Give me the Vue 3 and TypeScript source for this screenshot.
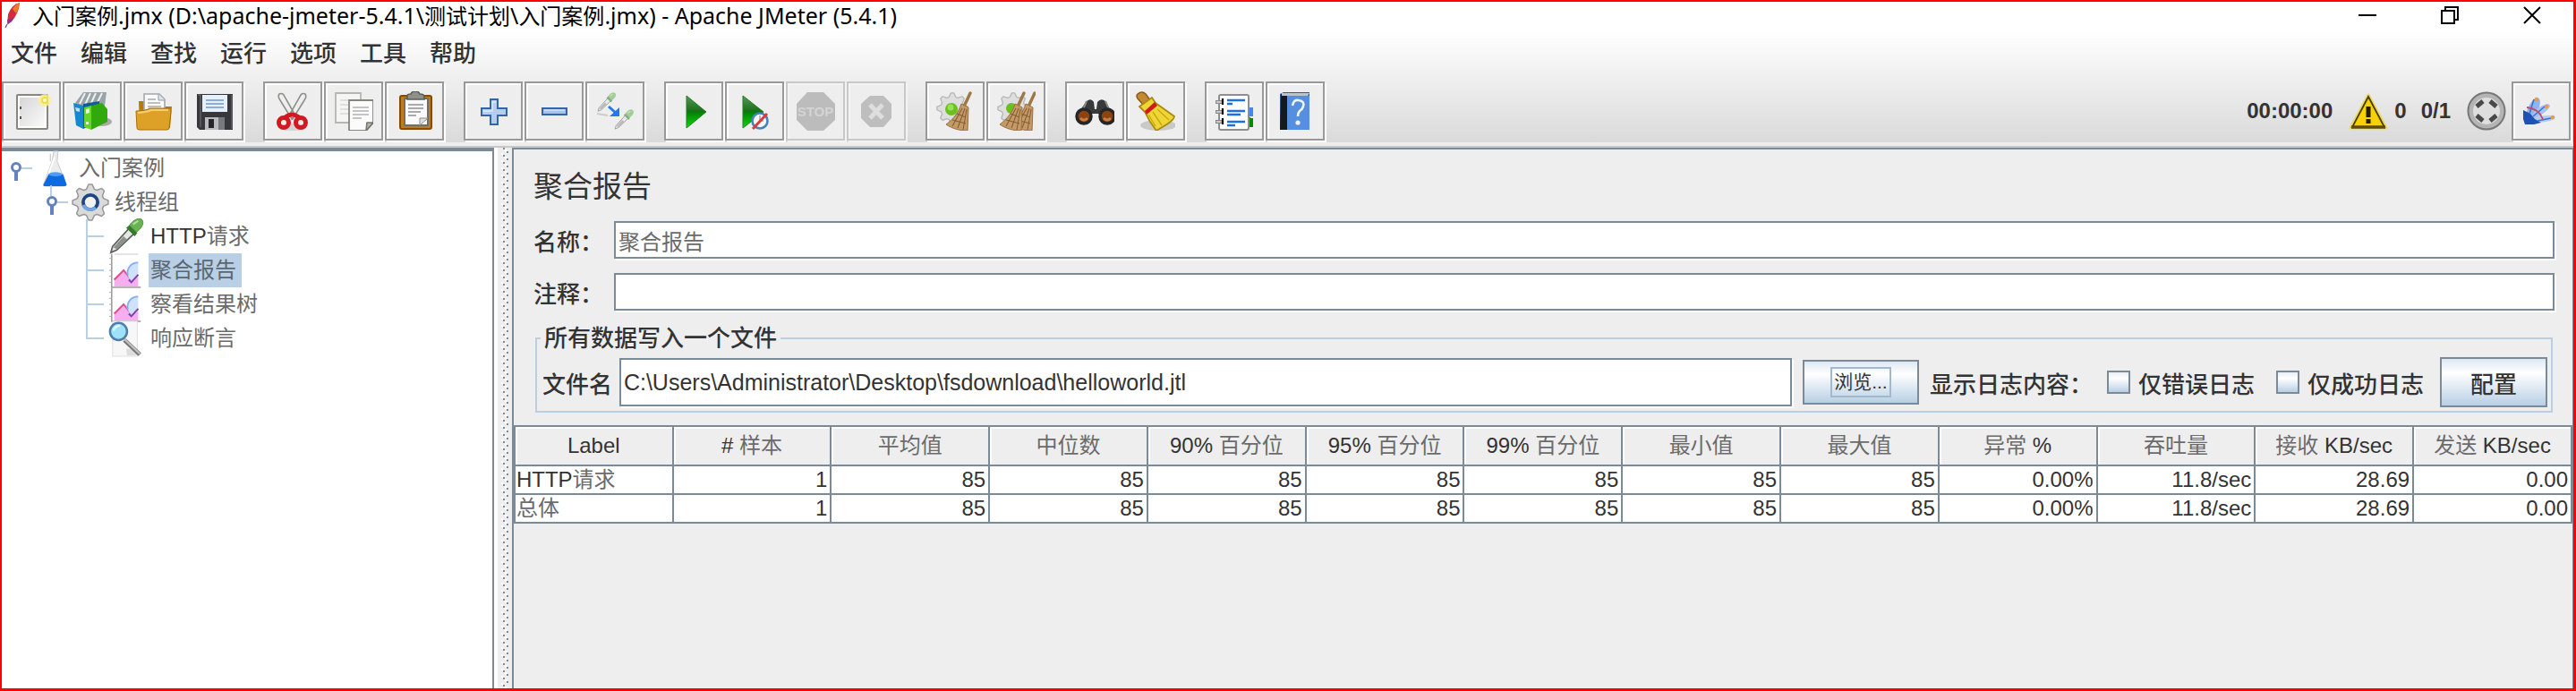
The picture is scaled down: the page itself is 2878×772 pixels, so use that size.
<script setup lang="ts">
import { ref } from 'vue'

interface ToolButton {
  id: string
  label: string
  disabled?: boolean
}
interface TreeNode {
  label: string
  icon: string
  level: number
  guide: string
  selected?: boolean
}
interface Segment {
  text: string
  han: boolean
}

const title = '入门案例.jmx (D:\\apache-jmeter-5.4.1\\测试计划\\入门案例.jmx) - Apache JMeter (5.4.1)'
const menus = ['文件', '编辑', '查找', '运行', '选项', '工具', '帮助']

const toolGroups: ToolButton[][] = [
  [
    { id: 'new', label: '新建' },
    { id: 'templates', label: '模板' },
    { id: 'open', label: '打开' },
    { id: 'save', label: '保存' },
  ],
  [
    { id: 'cut', label: '剪切' },
    { id: 'copy', label: '复制' },
    { id: 'paste', label: '粘贴' },
  ],
  [
    { id: 'plus', label: '展开' },
    { id: 'minus', label: '折叠' },
    { id: 'toggle', label: '切换' },
  ],
  [
    { id: 'start', label: '启动' },
    { id: 'startNoTimers', label: '不停顿开始' },
    { id: 'stop', label: '停止', disabled: true },
    { id: 'shutdown', label: '关闭', disabled: true },
  ],
  [
    { id: 'clear', label: '清除' },
    { id: 'clearAll', label: '清除全部' },
  ],
  [
    { id: 'search', label: '搜索' },
    { id: 'resetSearch', label: '重置搜索' },
  ],
  [
    { id: 'functions', label: '函数助手' },
    { id: 'help', label: '帮助' },
  ],
]

const gear = (fill: string, stroke: string): string => {
  const pts: string[] = []
  for (let i = 0; i < 32; i++) {
    const r = i % 4 < 2 ? 21 : 16
    const a = ((i - 0.5) / 32) * Math.PI * 2
    pts.push(`${(22 + r * Math.cos(a)).toFixed(1)},${(22 + r * Math.sin(a)).toFixed(1)}`)
  }
  return `<polygon points="${pts.join(' ')}" fill="${fill}" stroke="${stroke}" stroke-width="1.6" stroke-linejoin="round"/>`
}

const broom =
  '<path d="M39 2l-7 15" stroke="#a07848" stroke-width="3.4" stroke-linecap="round"/>' +
  '<path d="M29 14l8 4-1 26C28 44 19 42 12 37c8-6 14-13 17-23z" fill="#c39a68" stroke="#98703f"/>' +
  '<path d="M30 19l-11 20M33 19l-8 22M35 20l-4 23M24 25l10 4M19 32l15 4" stroke="#86602f" stroke-width="1.1" fill="none"/>'

const dropper =
  '<path d="M4 41l2-7L25 13l6 6L11 38z" fill="#e4e7e4" stroke="#5d625d" stroke-width="1.8"/>' +
  '<path d="M7 35L19 22l4 4L11 37z" fill="#8c918c"/>' +
  '<path d="M22 12l10 10 3-4-9-9z" fill="#347a2c"/>' +
  '<path d="M26 9C29 4 35 0 40 2c4 4 0 11-6 15z" fill="#68b453" stroke="#4d923e"/>' +
  '<path d="M30 8l6-4" stroke="#b6e0a4" stroke-width="2"/>'

const chart =
  '<path d="M5 3v39h34" stroke="#999" stroke-width="1.6" fill="none"/><path d="M2 8h3M2 15h3M2 22h3M2 29h3M2 36h3" stroke="#aaa"/>' +
  '<path d="M8 41v-9l11-10 9 9 8-5v15z" fill="#f5aeee"/><path d="M8 33l11-11 8 10 7-5" stroke="#dc5187" stroke-width="2" fill="none"/>' +
  '<path d="M36 13c-10 0-14 9-12 15 2 7 6 7 12 1z" fill="#cfe1fb"/><path d="M36 13c-10 0-14 9-12 15" stroke="#86aef0" stroke-width="2" fill="none"/><path d="M25 33l3 3 8-9" stroke="#7b42ac" stroke-width="2" fill="none"/>'

const icons: Record<string, string> = {
  new:
    '<defs><linearGradient id="paper" x1="0" y1="0" x2="1" y2="1"><stop offset="0" stop-color="#d6d6d6"/><stop offset="1" stop-color="#fafafa"/></linearGradient></defs>' +
    '<rect x="6" y="4" width="34" height="38" rx="1" fill="#fff" stroke="#878780" stroke-width="2"/><rect x="9" y="7" width="28" height="32" fill="url(#paper)"/>' +
    '<path d="M10 17v3M10 28v3" stroke="#555" stroke-width="2"/><circle cx="37" cy="10" r="7" fill="#fbf08c" opacity=".8"/><circle cx="37" cy="10" r="3" fill="#fffde0" stroke="#f2dd42" stroke-width="2"/>',
  templates:
    '<ellipse cx="33" cy="34" rx="11" ry="5" fill="#aaa"/><path d="M3 13L12 1h26l-2 15-14 4-16-2z" fill="#9aa4a8"/><path d="M8 14l6-12M14 15l6-13M20 15l6-13M27 14l6-12" stroke="#eef0f0" stroke-width="2"/>' +
    '<path d="M1 13l11 3v26L4 38z" fill="#1688cf"/><path d="M12 14l18-3v22l-18 9z" fill="#0c5d98"/><path d="M3 18l5 1v4l-4-1z" fill="#b9e3fb"/>' +
    '<path d="M13 18l8-2v27l-8-3z" fill="#67d726"/><path d="M21 16l12-3 6 7v14L21 43z" fill="#31a80b"/><path d="M15 20l4-1v5l-4 1zM15 34h3v3h-3z" fill="#e7ffd8"/>',
  open:
    '<path d="M6 11h7l3 6h27l-2 24H7z" fill="#b87906"/><path d="M12 3h17l6 6v16H12z" fill="#fafafa" stroke="#a3a8ab" stroke-width="1.6"/><path d="M28 3v7h7" fill="#dce5e7" stroke="#8ea2a6"/>' +
    '<path d="M16 9h9M16 13h14M16 17h15" stroke="#aaa" stroke-width="1.6"/><path d="M3 22q11 0 15-3h22q2 0 2 3l-2 19q0 2-3 2H7q-3 0-3-2z" fill="#dda128" stroke="#a8700b"/><path d="M5 24q11-1 15-3h19" stroke="#f7cd73" stroke-width="2" fill="none"/>',
  save:
    '<path d="M3 3h40v40H6l-3-3z" fill="#38383c"/><path d="M4 4h3v36M42 4v38" stroke="#77777b" fill="none"/><rect x="9" y="4" width="28" height="19" fill="#e7f0fa"/><path d="M13 10h20M13 14h20M13 18h20" stroke="#8baed4" stroke-width="2"/>' +
    '<path d="M12 29h22v14H12z" fill="#b9bbbf"/><path d="M16 31h6v10h-6z" fill="#26262a"/><path d="M27 29h7v14h-7z" fill="#77797e"/>',
  cut:
    '<ellipse cx="22" cy="40" rx="16" ry="4" fill="#d4d4d4"/><path d="M7 3q4-2 6 3l12 21-4 4L8 10q-3-4-1-7zM36 3q-4-2-6 3L18 27l4 4L35 10q3-4 1-7z" fill="#eee" stroke="#8e8e8a" stroke-width="1.6"/>' +
    '<circle cx="12" cy="35" r="5.5" fill="none" stroke="#d21820" stroke-width="5"/><circle cx="31" cy="35" r="5.5" fill="none" stroke="#d21820" stroke-width="5"/><path d="M14 29q7-6 15 0" stroke="#d21820" stroke-width="5" fill="none"/>',
  copy:
    '<path d="M2 2h28v33H2z" fill="#f5f5f5" stroke="#b5b5b2" stroke-width="1.8"/><path d="M7 10h18M7 15h18M7 20h18M7 25h18" stroke="#d8d8d8" stroke-width="1.6"/>' +
    '<path d="M17 10h27v25l-8 9H17z" fill="#fbfbfb" stroke="#858580" stroke-width="1.8"/><path d="M21 18h18M21 22h18M21 26h18M21 30h10" stroke="#b2b2b2" stroke-width="1.6"/><path d="M44 35h-7l-1 9z" fill="#b5b9b2" stroke="#73776f" stroke-width="1.6"/>',
  paste:
    '<rect x="6" y="5" width="35" height="37" rx="2" fill="#bd7b22" stroke="#7d4c0e" stroke-width="2"/><path d="M11 8h26v30H11z" fill="#fafafa" stroke="#6f6f68" stroke-width="2"/>' +
    '<path d="M14 5q0-2 4-2 1-3 5-3t5 3q5 0 5 3v3H14z" fill="#8f9188" stroke="#5a5c54" stroke-width="1.6"/><path d="M15 15h17M15 19h17M15 23h14M15 27h9" stroke="#aaa" stroke-width="2"/><path d="M28 38v-8h9z" fill="#dedede" stroke="#8c8c86"/>',
  plus:
    '<path d="M19 9h8v10h10v8H27v10h-8V27H9v-8h10z" fill="#b6cdee" stroke="#3465a4" stroke-width="2"/><path d="M21 22v-10h4M11 22h10" stroke="#dfeafa" stroke-width="1.4" fill="none"/>',
  minus: '<rect x="9" y="19" width="27" height="7" fill="#a7c3ea" stroke="#3465a4" stroke-width="2"/><path d="M11 21h23" stroke="#d6e3f7" stroke-width="1.4"/>',
  toggle:
    '<g transform="translate(1 1) scale(.52)" opacity=".55">' + dropper + '</g><g transform="translate(20 20) scale(.54)" opacity=".55">' + dropper + '</g>' +
    '<path d="M15 17l9 8" stroke="#2378ee" stroke-width="3"/><path d="M27 18v10H16z" fill="#2378ee"/><path d="M2 25l12 2" stroke="#ccc" stroke-width="2"/>',
  start:
    '<defs><linearGradient id="go" x1="0" y1="0" x2="0" y2="1"><stop offset="0" stop-color="#5a965a"/><stop offset=".48" stop-color="#187018"/><stop offset=".53" stop-color="#008600"/><stop offset="1" stop-color="#12d812"/></linearGradient></defs><path d="M14 5l22 18L14 41z" fill="url(#go)" stroke="#208020"/>',
  startNoTimers:
    '<path d="M9 5l23 18L9 41z" fill="url(#go)" stroke="#208020"/><circle cx="28" cy="33" r="8.5" fill="#f6f7f8" stroke="#4682bd" stroke-width="2.6"/><path d="M28 27v6h4" stroke="#9ab" stroke-width="1.6" fill="none"/><path d="M36 25L20 42" stroke="#d93c3c" stroke-width="3"/>',
  stop:
    '<path d="M13 1h18l13 13v18L31 44H13L1 32V14z" fill="#bcbcbc"/><text x="22" y="28" text-anchor="middle" font-family="Liberation Sans, sans-serif" font-weight="700" font-size="15" fill="#d4d4d4">STOP</text>',
  shutdown: '<path d="M15 5h15l9 9v16l-9 10H15l-10-10V14z" fill="#bebebe"/><path d="M15 15l14 15M29 15L15 30" stroke="#dedede" stroke-width="5"/>',
  clear: '<g transform="translate(1 1) scale(.82)">' + gear('#dedede', '#b6b6b6') + '</g><circle cx="18" cy="20" r="7" fill="#6bc01e"/><circle cx="17" cy="18" r="3.5" fill="#99df57"/>' + broom,
  clearAll:
    '<g transform="translate(1 1) scale(.82)">' + gear('#dedede', '#b6b6b6') + '</g><circle cx="17" cy="19" r="6" fill="#6bc01e"/><g transform="translate(4 0)">' + broom + '</g><g transform="translate(-8 0)">' + broom + '</g>',
  search:
    '<path d="M13 11q5-4 8 1l1 8h2l1-8q4-5 9-1l8 15-9 6-7-7h-7l-8 7-8-7z" fill="#37393b"/><path d="M13 11l-6 14M34 11l6 14" stroke="#888" stroke-width="2"/>' +
    '<circle cx="10" cy="28" r="8" fill="#8c4312" stroke="#262626" stroke-width="3.5"/><circle cx="36" cy="28" r="8" fill="#8c4312" stroke="#262626" stroke-width="3.5"/><path d="M6 30q4 4 8 0M32 30q4 4 8 0" stroke="#cb7b3b" stroke-width="3" fill="none"/>',
  resetSearch:
    '<ellipse cx="25" cy="38" rx="20" ry="6" fill="#c9c9c6"/><path d="M2 3q5-4 9 0l5 7-7 6-7-8q-2-3 0-5z" fill="#c58936" stroke="#8c5a18" stroke-width="1.5"/>' +
    '<path d="M4 17L18 7l4 6 21 15q0 3-7 8l-13 8q-8-10-13-21z" fill="#edd635" stroke="#ab8b0d" stroke-width="1.8"/><path d="M10 22l11-10 3 4-12 10z" fill="#d11920"/><path d="M19 23l10 15M24 20l13 12M14 26l8 13" stroke="#c8a910" stroke-width="1.4"/>',
  functions:
    '<path d="M33 19h7v8h-7z" fill="#3f89ec"/><path d="M33 29h7v10h-7z" fill="#078807"/><rect x="5" y="4" width="33" height="39" rx="2" fill="#fff" stroke="#8e8e8e" stroke-width="2"/>' +
    '<path d="M39 18h4v10h-4z" fill="#3f89ec"/><path d="M39 30h4v10h-4z" fill="#078807"/>' +
    '<path d="M1 12h8M1 23h8M1 34h8" stroke="#888" stroke-width="4"/><path d="M2 12h7M2 23h7M2 34h7" stroke="#ddd" stroke-width="1.4"/><path d="M9 8v7M9 19v7M9 30v7" stroke="#111" stroke-width="2.2"/><path d="M14 10h20M14 22h20M14 34h20" stroke="#1c70e4" stroke-width="2.4"/><path d="M14 14h6M14 26h15M14 38h9" stroke="#1c70e4" stroke-width="2.4"/>',
  help:
    '<path d="M5 3l4-2h29v42H5z" fill="#2f5c9b"/><path d="M6 3h7v40H5z" fill="#17191d"/><path d="M13 5h25v38H13z" fill="#568fdf"/><path d="M7 2h31l-2 3H7z" fill="#b8c5cc"/><path d="M19 16q1-7 7-6 7 1 5 7-1 3-4 5-2 2-2 6" stroke="#edf5ff" stroke-width="2.6" fill="none"/><circle cx="25" cy="35" r="2.6" fill="#edf5ff"/>',
  flask:
    '<path d="M21 2h5l-1 12 11 27q0 2-4 2H12q-4 0-3-2l10-27z" fill="#ececec" stroke="#c3c8cc"/><path d="M17 5v9" stroke="#bbb"/><path d="M15 29h17l4 12q0 2-4 2H12q-4 0-3-2z" fill="#0d6ae0"/><ellipse cx="23" cy="29" rx="8" ry="2.5" fill="#4e9df8"/><path d="M22 9l-7 19" stroke="#fff" stroke-width="2"/>',
  threads:
    gear('#dadada', '#989898') + '<circle cx="22" cy="22" r="8.5" fill="#f2f2f2" stroke="#1e4588" stroke-width="4"/><path d="M14 25a8.5 8.5 0 0 0 14 3" stroke="#76a5e2" stroke-width="4" fill="none"/>',
  sampler: dropper + '<path d="M8 43h28" stroke="#ddd" stroke-width="1.6"/>',
  report: chart,
  assertion:
    '<path d="M6 2h29v41H6z" fill="#f7f7f7" stroke="#e0e0e0"/><path d="M22 34h10l4 8H23z" fill="#ddd"/><path d="M20 24l18 17" stroke="#777" stroke-width="5"/><path d="M20 23l18 17" stroke="#c5c5c5" stroke-width="2"/><circle cx="13" cy="14" r="10" fill="#9fe1f8" stroke="#4f7da9" stroke-width="2.6"/><path d="M7 13q2-6 8-6" stroke="#defbff" stroke-width="2.6" fill="none"/>',
  warning:
    '<path d="M22 4L2 41h40z" fill="#f4cf00" stroke="#e9d95c" stroke-width="3" stroke-linejoin="round"/><path d="M22 6L4 40h36z" fill="#f7d200" stroke="#4a3b0a" stroke-width="1.8"/><path d="M3 40h38" stroke="#5e4a0b" stroke-width="3.4"/><path d="M22 17v12" stroke="#231c05" stroke-width="5"/><path d="M22 31v5" stroke="#231c05" stroke-width="5"/>',
  remote:
    '<circle cx="22" cy="22" r="20.5" fill="#b4b4b4" stroke="#777" stroke-width="2"/><circle cx="22" cy="22" r="15" fill="#dedede"/><path d="M11 17l7-6M26 11l7 6M11 27l7 6M26 33l7-6" stroke="#494949" stroke-width="5"/>',
  logo:
    '<path d="M5 35q-1-18 11-28 7-1 4 11L10 34z" fill="#8fb4ee"/><path d="M8 32Q17 16 29 14q6 1 0 7L11 35z" fill="#a5c2f2"/><path d="M7 33q12-7 26-6 10 2-1 6-10 3-24 1z" fill="#b4cbf5"/><path d="M2 21l8 4 5 6 7 4-8 2H4l-2-6z" fill="#2050b4"/><path d="M9 25l5-16M13 28l13-11M18 33l15-3" stroke="#3975d0" stroke-width="1.6"/><path d="M6 18q13 1 18 13" stroke="#c44b69" stroke-width="1.8" fill="none"/><circle cx="17" cy="9" r="2.2" fill="#e99a51"/><circle cx="28" cy="17" r="2.2" fill="#e99a51"/><circle cx="35" cy="29" r="2.2" fill="#e99a51"/>',
}

const guides: Record<string, string> = {
  root: '<path d="M22 19h12" stroke="#b8cfe5" stroke-width="2"/><path d="M16 22v11" stroke="#6382bf" stroke-width="4"/><circle cx="16" cy="18" r="4.5" fill="#fff" stroke="#6382bf" stroke-width="3"/>',
  branch:
    '<path d="M55 0v12M62 19h12" stroke="#b8cfe5" stroke-width="2"/><path d="M56 22v11" stroke="#6382bf" stroke-width="4"/><circle cx="56" cy="18" r="4.5" fill="#fff" stroke="#6382bf" stroke-width="3"/>',
  leaf: '<path d="M95 0v38M95 19h19" stroke="#b8cfe5" stroke-width="2"/>',
  last: '<path d="M95 0v19h19" stroke="#b8cfe5" stroke-width="2" fill="none"/>',
}

const tree: TreeNode[] = [
  { label: '入门案例', icon: 'flask', level: 1, guide: 'root' },
  { label: '线程组', icon: 'threads', level: 2, guide: 'branch' },
  { label: 'HTTP请求', icon: 'sampler', level: 3, guide: 'leaf' },
  { label: '聚合报告', icon: 'report', level: 3, guide: 'leaf', selected: true },
  { label: '察看结果树', icon: 'report', level: 3, guide: 'leaf' },
  { label: '响应断言', icon: 'assertion', level: 3, guide: 'last' },
]

const name = ref('聚合报告')
const comment = ref('')
const fileName = ref('C:\\Users\\Administrator\\Desktop\\fsdownload\\helloworld.jtl')
const errorsOnly = ref(false)
const successOnly = ref(false)

const columns = ['Label', '# 样本', '平均值', '中位数', '90% 百分位', '95% 百分位', '99% 百分位', '最小值', '最大值', '异常 %', '吞吐量', '接收 KB/sec', '发送 KB/sec']
const stats = ['1', '85', '85', '85', '85', '85', '85', '85', '0.00%', '11.8/sec', '28.69', '0.00']
const rows = [
  ['HTTP请求', ...stats],
  ['总体', ...stats],
]

/** Splits a label into runs of Chinese and Latin text so each can have its own tone. */
function segments(text: string): Segment[] {
  return (text.match(/[\u4e00-\u9fff]+|[^\u4e00-\u9fff]+/g) ?? []).map((t) => ({
    text: t,
    han: /[\u4e00-\u9fff]/.test(t),
  }))
}
</script>

<template>
  <div class="window">
    <header class="top">
      <div class="titlebar">
        <svg class="feather" viewBox="0 0 20 30" aria-hidden="true">
          <path d="M17 1q-9 2-13 13l-1 11 5-3q8-9 9-21z" fill="#d22d3c" />
          <path d="M17 1q-5 2-8 7l4 5q3-5 4-12z" fill="#ee7b25" />
          <path d="M3 20l1 5 4-3 2-4z" fill="#89338c" />
          <path d="M3 25l-2 4" stroke="#6b5aa8" stroke-width="1.4" />
        </svg>
        <h1><span v-for="(s, k) in segments(title)" :key="k" :class="{ 'title-han': s.han }">{{ s.text }}</span></h1>
        <div class="controls">
          <button type="button" aria-label="最小化"><svg viewBox="0 0 22 22"><path d="M1 11h20" /></svg></button>
          <button type="button" aria-label="还原"><svg viewBox="0 0 22 22"><path d="M2 6h14v14H2zM6 6V2h14v14h-4" /></svg></button>
          <button type="button" aria-label="关闭"><svg viewBox="0 0 22 22"><path d="M2 2l18 18M20 2L2 20" /></svg></button>
        </div>
      </div>
      <nav class="menubar">
        <button v-for="m in menus" :key="m" type="button">{{ m }}</button>
      </nav>
      <div class="toolbar">
        <div v-for="(group, g) in toolGroups" :key="g" class="group">
          <button v-for="b in group" :key="b.id" type="button" class="tool" :disabled="b.disabled" :aria-label="b.label">
            <svg class="icon" viewBox="0 0 44 44" fill="none" v-html="icons[b.id]"></svg>
          </button>
        </div>
        <div class="status">
          <span class="time">00:00:00</span>
          <svg class="icon" viewBox="0 0 44 44" fill="none" v-html="icons.warning"></svg>
          <span class="errors">0</span>
          <span class="threads">0/1</span>
          <svg class="icon" viewBox="0 0 44 44" fill="none" v-html="icons.remote"></svg>
          <button type="button" class="tool" aria-label="JMeter">
            <svg class="icon" viewBox="0 0 44 44" fill="none" v-html="icons.logo"></svg>
          </button>
        </div>
      </div>
    </header>

    <main class="workspace">
      <ul class="tree">
        <li v-for="(n, i) in tree" :key="i">
          <svg class="guide" :class="'level' + n.level" height="38" fill="none" v-html="guides[n.guide]"></svg>
          <svg class="icon" viewBox="0 0 44 44" fill="none" v-html="icons[n.icon]"></svg>
          <span class="node" :class="{ selected: n.selected }"
            ><span v-for="(s, k) in segments(n.label)" :key="k" :class="{ han: s.han }">{{ s.text }}</span></span
          >
        </li>
      </ul>

      <svg class="splitter" aria-hidden="true">
        <defs>
          <pattern id="bumps" width="16" height="8" patternUnits="userSpaceOnUse">
            <path d="M4 6h2v2H4zM8 2h2v2H8z" fill="#fff" />
            <path d="M6 0h2v2H6zM10 4h2v2h-2z" fill="#7a8a99" />
          </pattern>
        </defs>
        <rect width="16" height="100%" fill="url(#bumps)" />
      </svg>

      <section class="panel">
        <div class="form">
          <h2>聚合报告</h2>
          <div class="row">
            <label for="name">名称：</label>
            <input id="name" v-model="name" class="han" type="text" />
          </div>
          <div class="row">
            <label for="comment">注释：</label>
            <input id="comment" v-model="comment" type="text" />
          </div>
          <fieldset>
            <legend>所有数据写入一个文件</legend>
            <div class="file">
              <label for="file">文件名</label>
              <input id="file" v-model="fileName" type="text" />
              <button type="button" class="metal browse"><span>浏览...</span></button>
              <span class="log">显示日志内容：</span>
              <label class="check"><input v-model="errorsOnly" type="checkbox" />仅错误日志</label>
              <label class="check"><input v-model="successOnly" type="checkbox" />仅成功日志</label>
              <button type="button" class="metal config">配置</button>
            </div>
          </fieldset>
        </div>
        <div class="results">
          <table>
            <thead>
              <tr>
                <th v-for="c in columns" :key="c" scope="col"
                  ><span v-for="(s, k) in segments(c)" :key="k" :class="{ han: s.han }">{{ s.text }}</span></th
                >
              </tr>
            </thead>
            <tbody>
              <tr v-for="(r, i) in rows" :key="i">
                <td v-for="(v, j) in r" :key="j"
                  ><span v-for="(s, k) in segments(v)" :key="k" :class="{ han: s.han }">{{ s.text }}</span></td
                >
              </tr>
            </tbody>
          </table>
        </div>
      </section>
    </main>
  </div>
</template>

<style>
body {
  margin: 0;
}
</style>

<style scoped>
* {
  box-sizing: border-box;
}
.window {
  display: flex;
  flex-direction: column;
  min-height: 100vh;
  border: solid #f00;
  border-width: 2px 3px 3px 2px;
  background: #eee;
  color: #333;
  font-family: 'Liberation Sans', 'Noto Sans CJK SC', sans-serif;
  font-size: 24px;
}
button,
input {
  margin: 0;
  padding: 0;
  border: 0;
  background: none;
  color: inherit;
  font: inherit;
}
.icon {
  display: block;
  flex: none;
  width: 44px;
  height: 44px;
}
.top {
  border-bottom: 2px solid #c8c8c8;
  background: linear-gradient(#fff 32px, #dadada 157px, #eee 157px);
}
.titlebar {
  display: flex;
  height: 30px;
  align-items: center;
  color: #000;
}
.feather {
  width: 20px;
  height: 30px;
  margin-left: 3px;
}
h1 {
  flex: 1;
  margin: 0 0 0 11px;
  font: 400 25px/28px 'Noto Sans', 'Noto Sans CJK SC', sans-serif;
}
.title-han {
  font-size: 24px;
}
.controls {
  display: flex;
}
.controls button {
  display: flex;
  width: 92px;
  height: 28px;
  align-items: center;
  justify-content: center;
}
.controls svg {
  width: 22px;
  height: 22px;
  fill: none;
  stroke: #000;
  stroke-width: 2;
}
.menubar {
  display: flex;
  gap: 26px;
  height: 59px;
  padding: 8px 0 0 10px;
  align-items: flex-start;
}
.menubar button {
  font-size: 26px;
  font-weight: 500;
  line-height: 40px;
}
.toolbar {
  display: flex;
  height: 72px;
  gap: 22px;
}
.group {
  display: flex;
  gap: 2px;
}
.tool {
  display: flex;
  flex: none;
  width: 66px;
  height: 66px;
  align-items: center;
  justify-content: center;
  border: 2px solid #999;
  background: #eee;
  box-shadow: inset 2px 2px #fff, 2px 2px #fff;
}
.tool:disabled {
  border-color: #c8c8c8;
  box-shadow: inset 2px 2px #f3f3f3, 2px 2px #f3f3f3;
}
.status {
  display: flex;
  height: 66px;
  margin-left: auto;
  padding-right: 3px;
  align-items: center;
  font-weight: 700;
}
.time {
  margin-right: 18px;
}
.errors {
  margin: 0 16px 0 7px;
}
.threads {
  margin-right: 18px;
}
.status .tool {
  margin-left: 6px;
}
.workspace {
  display: flex;
  flex: 1;
}
.tree {
  flex: none;
  width: 19.14%;
  margin: 0 4px 0 0;
  padding: 0;
  border-top: 4px solid #7a8a99;
  border-right: 2px solid #7a8a99;
  background: #fff;
  box-shadow: 4px 0 #fff;
  list-style: none;
}
.tree li {
  display: flex;
  height: 38px;
  align-items: center;
}
.guide {
  flex: none;
}
.tree .icon {
  height: 42px;
}
.level1 {
  width: 37px;
}
.level2 {
  width: 77px;
}
.level3 {
  width: 117px;
}
.node {
  margin-left: 3px;
  padding: 0 6px 0 2px;
  line-height: 38px;
}
.selected {
  background: #b8cfe5;
}
.han {
  color: #6b6b6b;
}
.selected .han {
  color: #5c6670;
}
.splitter {
  flex: none;
  width: 16px;
  height: auto;
  align-self: stretch;
}
.panel {
  flex: 1;
  min-width: 0;
  border: solid #7a8a99;
  border-width: 2px 1px 0 2px;
}
.form {
  padding: 20px 20px 14px 22px;
}
h2 {
  margin: 0;
  font-size: 33px;
  font-weight: 400;
  line-height: 44px;
}
.row {
  display: flex;
  height: 42px;
  margin-top: 16px;
  align-items: center;
}
.row label {
  flex: none;
  width: 90px;
}
label,
legend,
.log,
.config {
  font-size: 26px;
  font-weight: 500;
  white-space: nowrap;
}
input[type='text'] {
  flex: 1;
  min-width: 0;
  height: 42px;
  padding: 0 3px;
  border: 2px solid #7a8a99;
  background: #fff;
  box-shadow: 2px 2px #fff;
}
fieldset {
  min-width: 0;
  margin: 13px 2px 0 2px;
  padding: 3px 4px 4px 6px;
  border: 2px solid #b8cfe5;
}
legend {
  margin-left: -2px;
  padding: 0 4px;
  line-height: 36px;
}
.file {
  display: flex;
  align-items: center;
}
.file > label:first-child {
  margin-right: 8px;
}
.file input[type='text'] {
  height: 54px;
  font-size: 25px;
}
.metal {
  flex: none;
  border: 2px solid #7a8a99;
  background: linear-gradient(#dde8f3, #fff 30%, #b8cfe5);
}
.browse {
  width: 130px;
  height: 50px;
  margin: 0 12px;
}
.browse span {
  display: inline-block;
  padding: 0 2px;
  border: 2px solid #a3b8cc;
  font-size: 21px;
  line-height: 30px;
}
.config {
  width: 120px;
  height: 56px;
  margin-left: 18px;
}
.check {
  display: flex;
  margin-left: 24px;
  align-items: center;
}
.log + .check {
  margin-left: 16px;
}
.check input {
  width: 26px;
  height: 26px;
  margin-right: 9px;
  border: 2px solid #7a8a99;
  appearance: none;
  background: linear-gradient(#e6eef6, #fff 30%, #b8cfe5);
}
.check input:checked {
  background: #7a8a99;
}
.results {
  border: solid #7a8a99;
  border-width: 2px 0 0 2px;
}
table {
  width: 100%;
  border-collapse: separate;
  border-spacing: 0;
  table-layout: fixed;
}
th,
td {
  padding: 0 3px;
  border: solid #7a8a99;
  border-width: 0 2px 2px 0;
  font-weight: 400;
  white-space: pre;
}
th {
  height: 44px;
  box-shadow: inset 2px 2px #fff;
  line-height: 40px;
}
td {
  height: 32px;
  background: #fff;
  line-height: 30px;
  text-align: right;
}
td:first-child {
  padding-left: 1px;
  text-align: left;
}
</style>
